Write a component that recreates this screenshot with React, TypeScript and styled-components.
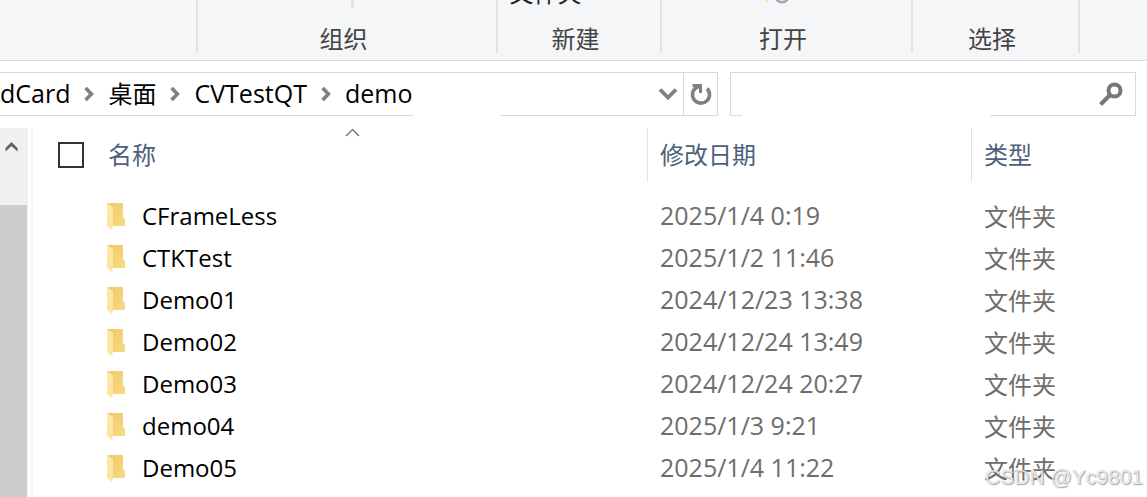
import React from 'react';
import styled, { createGlobalStyle } from 'styled-components';

const GlobalStyle = createGlobalStyle`
  *, *::before, *::after { box-sizing: border-box; }
  body {
    margin: 0;
    background: #fff;
    color: #000;
    font-family: "Open Sans", "Noto Sans CJK SC", sans-serif;
    font-size: 24px;
    line-height: 32px;
  }
  button, input { font: inherit; color: inherit; }
`;

const Window = styled.main`
  position: relative;
  display: flex;
  flex-direction: column;
  height: 100vh;
  overflow: hidden;
`;

const Ribbon = styled.section`
  display: flex;
  flex: none;
  height: 61px;
  padding-bottom: 7px;
  background: #f4f6f8;
  border-bottom: 1px solid #d9dadb;
`;

const Group = styled.div<{ $width?: number }>`
  display: flex;
  flex-direction: column;
  align-items: center;
  justify-content: flex-end;
  flex: ${(p) => (p.$width ? `0 0 ${p.$width}px` : '1 1 0')};
  padding-right: 7px;
  border-right: ${(p) => (p.$width ? '2px solid #e1e2e4' : 'none')};
  color: #444;
`;

const Tools = styled.div`
  display: flex;
  flex: none;
  align-items: flex-end;
  height: 32px;
  margin-bottom: 2px;
  color: #222;
`;

const ToolButton = styled.button`
  display: block;
  height: 32px;
  padding: 0;
  margin-right: 60px;
  margin-bottom: 14px;
  border: 0;
  background: none;
  line-height: 32px;
`;

const ToolDivider = styled.span`
  width: 3px;
  height: 32px;
  margin: 0 0 15px 18px;
  background: #e1e2e4;
`;

const GroupLabel = styled.span`
  flex: none;
  height: 28px;
  line-height: 28px;
`;

const NavRow = styled.div`
  display: flex;
  flex: none;
  gap: 12px;
  padding: 11px 11px 12px 0;
`;

const Field = styled.div<{ $width?: number }>`
  position: relative;
  display: flex;
  align-items: center;
  flex: ${(p) => (p.$width ? `0 1 ${p.$width}px` : '1 1 0')};
  height: 44px;
  border: 1px solid #d9d9d9;
  border-left-width: ${(p) => (p.$width ? 0 : 1)}px;
`;

const BorderGap = styled.span<{ $left: number; $right: number }>`
  position: absolute;
  bottom: -1px;
  left: ${(p) => p.$left}px;
  right: ${(p) => p.$right}px;
  height: 1px;
  background: #fff;
`;

const Crumbs = styled.nav`
  display: flex;
  flex: 1;
  align-items: center;
  gap: 14px;
  white-space: nowrap;
`;

const Crumb = styled.a<{ $latin?: boolean }>`
  padding-bottom: ${(p) => (p.$latin ? 2 : 0)}px;
  color: #000;
  font-size: ${(p) => (p.$latin ? 25 : 24)}px;
  text-decoration: none;
`;

const IconButton = styled.button<{ $width: number; $divided?: boolean }>`
  display: flex;
  align-items: center;
  justify-content: center;
  width: ${(p) => p.$width}px;
  height: 42px;
  padding: 0;
  border: 0;
  border-left: ${(p) => (p.$divided ? '1px solid #d9d9d9' : '0')};
  background: none;
`;

const SearchInput = styled.input`
  flex: 1;
  min-width: 0;
  height: 40px;
  padding: 0 12px;
  border: 0;
  outline: 0;
  background: transparent;
`;

const Content = styled.div`
  display: flex;
  flex: 1;
  min-height: 0;
`;

const Scrollbar = styled.div`
  display: flex;
  flex-direction: column;
  flex: none;
  width: 28px;
  padding-right: 1px;
  background: #f0f0f0;
`;

const ScrollUp = styled.button`
  display: flex;
  align-items: flex-start;
  flex: none;
  height: 77px;
  padding: 13px 0 0 5px;
  border: 0;
  background: none;
`;

const Thumb = styled.div`
  flex: 1;
  background: #cdcdcd;
`;

const Listing = styled.div`
  flex: 1;
  min-width: 0;
  margin-left: 3px;
  border-left: 2px solid #f6f6f6;
`;

const Table = styled.table`
  width: 100%;
  table-layout: fixed;
  border-collapse: collapse;
  text-align: left;
`;

const Col = styled.col<{ $width?: number }>`
  width: ${(p) => (p.$width ? `${p.$width}px` : 'auto')};
`;

const HeadCell = styled.th`
  height: 68px;
  padding: 0;
  font-weight: 400;
  color: #4c607a;
  vertical-align: top;
`;

const HeadLabel = styled.div<{ $divided?: boolean }>`
  position: relative;
  display: flex;
  align-items: center;
  height: 54px;
  padding-left: ${(p) => (p.$divided ? 12 : 1)}px;
  border-left: ${(p) => (p.$divided ? '1px solid #e3e3e3' : '0')};
`;

const SortMark = styled.svg`
  position: absolute;
  top: 0;
  left: 237px;
`;

const SelectAll = styled.input`
  appearance: none;
  width: 26px;
  height: 26px;
  margin: 0 0 0 24px;
  border: 2px solid #333;
  background: #fff;
`;

const Cell = styled.td`
  height: 42px;
  padding: 0 0 0 13px;
  color: #6d6d6d;
  white-space: nowrap;
`;

const DateCell = styled(Cell)`
  padding-bottom: 4px;
  font-size: 25px;
`;

const NameCell = styled(Cell)`
  padding: 0;
  color: #000;
`;

const Name = styled.div`
  display: flex;
  align-items: center;
  gap: 14px;
`;

const NameText = styled.span`
  padding-bottom: 2px;
`;

const Watermark = styled.div`
  position: absolute;
  right: 4px;
  bottom: 6px;
  font: 21px/28px "Liberation Sans", sans-serif;
  color: rgba(255, 255, 255, 0.75);
  text-shadow: 1px 1px 1px rgba(110, 110, 110, 0.6), 0 0 1px rgba(130, 130, 130, 0.5);
`;

const Chevron = () => (
  <svg width="10" height="16" viewBox="0 0 10 16" fill="none" stroke="#808080" strokeWidth="3.6" aria-hidden="true">
    <path d="M1.6 2L7.4 8L1.6 14" />
  </svg>
);

const FolderIcon = () => (
  <svg width="21" height="28" viewBox="0 0 21 28" aria-hidden="true">
    <defs>
      <linearGradient id="back" x1="0" y1="0" x2="1" y2="1">
        <stop offset="0" stopColor="#eec868" />
        <stop offset="1" stopColor="#f9da83" />
      </linearGradient>
      <linearGradient id="flap" x1="0" y1="0" x2="1" y2="1">
        <stop offset="0" stopColor="#ffe9ab" />
        <stop offset="1" stopColor="#fde49c" />
      </linearGradient>
    </defs>
    <path d="M0 0H16V14L18 16V23H5L0 20Z" fill="url(#back)" />
    <path d="M0 0L6 4V22L5 27L0 23Z" fill="url(#flap)" />
  </svg>
);

const files = [
  ['CFrameLess', '2025/1/4 0:19'],
  ['CTKTest', '2025/1/2 11:46'],
  ['Demo01', '2024/12/23 13:38'],
  ['Demo02', '2024/12/24 13:49'],
  ['Demo03', '2024/12/24 20:27'],
  ['demo04', '2025/1/3 9:21'],
  ['Demo05', '2025/1/4 11:22'],
];

export default function App() {
  return (
    <>
      <GlobalStyle />
      <Window>
        <Ribbon>
          <Group $width={198} />
          <Group $width={300}>
            <Tools><ToolDivider /></Tools>
            <GroupLabel>组织</GroupLabel>
          </Group>
          <Group $width={164}>
            <Tools><ToolButton type="button">文件夹</ToolButton></Tools>
            <GroupLabel>新建</GroupLabel>
          </Group>
          <Group $width={251}>
            <Tools>
              <svg width="44" height="50" viewBox="0 0 44 50" aria-hidden="true">
                <path d="M1 18L7 23V30L2 25Z" fill="#ffe08a" />
                <circle cx="21" cy="23" r="6.500" fill="#d5d9dd" stroke="#9aa0a6" strokeWidth="2" />
              </svg>
            </Tools>
            <GroupLabel>打开</GroupLabel>
          </Group>
          <Group $width={167}>
            <GroupLabel>选择</GroupLabel>
          </Group>
          <Group />
        </Ribbon>

        <NavRow>
          <Field $width={718}>
            <Crumbs aria-label="路径">
              <Crumb $latin href="#card">dCard</Crumb>
              <Chevron />
              <Crumb href="#desktop">桌面</Crumb>
              <Chevron />
              <Crumb $latin href="#cvtestqt">CVTestQT</Crumb>
              <Chevron />
              <Crumb $latin href="#demo">demo</Crumb>
            </Crumbs>
            <IconButton type="button" $width={30} aria-label="历史">
              <svg width="20" height="14" viewBox="0 0 20 14" fill="none" stroke="#808080" strokeWidth="3.8">
                <path d="M2 2.5L10 10.5L18 2.5" />
              </svg>
            </IconButton>
            <IconButton type="button" $width={34} $divided aria-label="刷新">
              <svg width="25" height="24" viewBox="0 0 25 24" fill="none" stroke="#808080">
                <path d="M19 6.600A8.500 8.500 0 1 1 7.500 6.200L10.500 4.500" strokeWidth="3.600" />
                <path d="M4.500 3.500H12.500V11" strokeWidth="3" />
              </svg>
            </IconButton>
            <BorderGap $left={413} $right={217} />
          </Field>
          <Field>
            <SearchInput type="text" aria-label="搜索" />
            <IconButton type="button" $width={48} aria-label="搜索">
              <svg width="24" height="24" viewBox="0 0 24 24" fill="none" stroke="#777">
                <circle cx="15.5" cy="8.5" r="6" strokeWidth="4" />
                <path d="M11 13L1.5 22.5" strokeWidth="4" />
              </svg>
            </IconButton>
            <BorderGap $left={11} $right={145} />
          </Field>
        </NavRow>

        <Content>
          <Scrollbar>
            <ScrollUp type="button" aria-label="向上滚动">
              <svg width="13" height="11" viewBox="0 0 13 11" fill="#606060">
                <path d="M6.5 1L12.5 7V10.5L6.5 5L0.5 10.5V7Z" />
              </svg>
            </ScrollUp>
            <Thumb />
          </Scrollbar>
          <Listing>
            <Table>
              <colgroup>
                <Col $width={74} />
                <Col $width={540} />
                <Col $width={324} />
                <Col />
              </colgroup>
              <thead>
                <tr>
                  <HeadCell>
                    <HeadLabel><SelectAll type="checkbox" aria-label="全选" /></HeadLabel>
                  </HeadCell>
                  <HeadCell>
                    <HeadLabel>
                      名称
                      <SortMark width="16" height="10" viewBox="0 0 16 10" fill="none" stroke="#666" strokeWidth="1.2" aria-hidden="true">
                        <path d="M2 8L8.500 1.500L15 8" />
                      </SortMark>
                    </HeadLabel>
                  </HeadCell>
                  <HeadCell><HeadLabel $divided>修改日期</HeadLabel></HeadCell>
                  <HeadCell><HeadLabel $divided>类型</HeadLabel></HeadCell>
                </tr>
              </thead>
              <tbody>
                {files.map(([name, date]) => (
                  <tr key={name}>
                    <NameCell />
                    <NameCell><Name><FolderIcon /><NameText>{name}</NameText></Name></NameCell>
                    <DateCell>{date}</DateCell>
                    <Cell>文件夹</Cell>
                  </tr>
                ))}
              </tbody>
            </Table>
          </Listing>
        </Content>
        <Watermark>CSDN @Yc9801</Watermark>
      </Window>
    </>
  );
}
